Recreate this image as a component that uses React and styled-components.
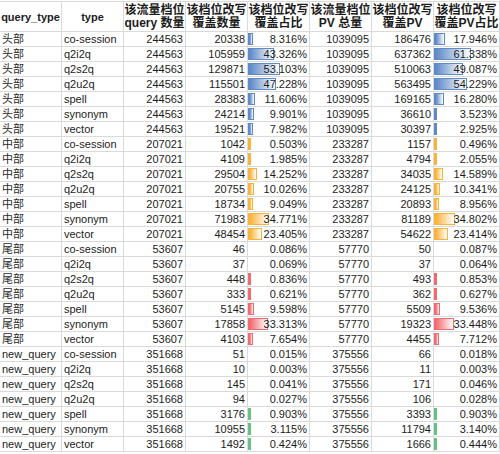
import React from "react";
import styled, { createGlobalStyle } from "styled-components";

const GlobalStyle = createGlobalStyle`
    html, body {
        margin: 0;
        padding: 0;
        background: #fff;
    }
    body {
        font-family: "Liberation Sans", "Noto Sans CJK SC", sans-serif;
        color: #1c1c1c;
    }
`

const Sheet = styled.div`
    width: 500px;
    height: 454px;
    overflow: hidden;
    padding-top: 1px;
    box-sizing: border-box;
`

const Grid = styled.div`
    display: grid;
    grid-template-columns: repeat(7, 62px) 66px;
    border-top: 1px solid #dadada;
`

const HeadCell = styled.div`
    height: 30px;
    box-sizing: border-box;
    border-right: 1px solid #dadada;
    border-bottom: 1px solid #dadada;
    display: flex;
    align-items: center;
    justify-content: center;
    text-align: center;
    font-weight: 700;
    font-size: ${props => (props.latin ? '11px' : '12px')};
    line-height: 13px;
    white-space: nowrap;
    padding-top: 1px;
`

const Cell = styled.div`
    position: relative;
    height: 15px;
    box-sizing: border-box;
    border-right: 1px solid #dadada;
    border-bottom: 1px solid #dadada;
    font-size: 11px;
    line-height: 14px;
    padding: 0 2px;
    white-space: nowrap;
    overflow: hidden;
    text-align: ${props => (props.right ? 'right' : 'left')};
    color: ${props => (props.cjk ? '#2a2a2a' : '#1c1c1c')};
`

const Bar = styled.div`
    position: absolute;
    left: 0;
    top: 1px;
    bottom: 1px;
    box-sizing: border-box;
    border: 1px solid ${props => props.color};
    border-left-width: 2px;
    background: linear-gradient(to right, ${props => props.color}, #ffffff);
`

const Value = styled.span`
    position: relative;
`

const colors = {
    '头部': '#5f8ac8',
    '中部': '#f9b33a',
    '尾部': '#f06a6f',
    'new_query': '#66c184',
}

const headers = [
    { text: 'query_type', latin: true },
    { text: 'type', latin: true },
    { text: ['该流量档位', 'query 数量'] },
    { text: ['该档位改写', '覆盖数量'] },
    { text: ['该档位改写', '覆盖占比'] },
    { text: ['该流量档位', 'PV 总量'] },
    { text: ['该档位改写', '覆盖PV'] },
    { text: ['该档位改写', '覆盖PV占比'] },
]

const rows = [
    ['头部', 'co-session', 244563, 20338, '8.316%', 1039095, 186476, '17.946%'],
    ['头部', 'q2i2q', 244563, 105959, '43.326%', 1039095, 637362, '61.338%'],
    ['头部', 'q2s2q', 244563, 129871, '53.103%', 1039095, 510063, '49.087%'],
    ['头部', 'q2u2q', 244563, 115501, '47.228%', 1039095, 563495, '54.229%'],
    ['头部', 'spell', 244563, 28383, '11.606%', 1039095, 169165, '16.280%'],
    ['头部', 'synonym', 244563, 24214, '9.901%', 1039095, 36610, '3.523%'],
    ['头部', 'vector', 244563, 19521, '7.982%', 1039095, 30397, '2.925%'],
    ['中部', 'co-session', 207021, 1042, '0.503%', 233287, 1157, '0.496%'],
    ['中部', 'q2i2q', 207021, 4109, '1.985%', 233287, 4794, '2.055%'],
    ['中部', 'q2s2q', 207021, 29504, '14.252%', 233287, 34035, '14.589%'],
    ['中部', 'q2u2q', 207021, 20755, '10.026%', 233287, 24125, '10.341%'],
    ['中部', 'spell', 207021, 18734, '9.049%', 233287, 20893, '8.956%'],
    ['中部', 'synonym', 207021, 71983, '34.771%', 233287, 81189, '34.802%'],
    ['中部', 'vector', 207021, 48454, '23.405%', 233287, 54622, '23.414%'],
    ['尾部', 'co-session', 53607, 46, '0.086%', 57770, 50, '0.087%'],
    ['尾部', 'q2i2q', 53607, 37, '0.069%', 57770, 37, '0.064%'],
    ['尾部', 'q2s2q', 53607, 448, '0.836%', 57770, 493, '0.853%'],
    ['尾部', 'q2u2q', 53607, 333, '0.621%', 57770, 362, '0.627%'],
    ['尾部', 'spell', 53607, 5145, '9.598%', 57770, 5509, '9.536%'],
    ['尾部', 'synonym', 53607, 17858, '33.313%', 57770, 19323, '33.448%'],
    ['尾部', 'vector', 53607, 4103, '7.654%', 57770, 4455, '7.712%'],
    ['new_query', 'co-session', 351668, 51, '0.015%', 375556, 66, '0.018%'],
    ['new_query', 'q2i2q', 351668, 10, '0.003%', 375556, 11, '0.003%'],
    ['new_query', 'q2s2q', 351668, 145, '0.041%', 375556, 171, '0.046%'],
    ['new_query', 'q2u2q', 351668, 94, '0.027%', 375556, 106, '0.028%'],
    ['new_query', 'spell', 351668, 3176, '0.903%', 375556, 3393, '0.903%'],
    ['new_query', 'synonym', 351668, 10955, '3.115%', 375556, 11794, '3.140%'],
    ['new_query', 'vector', 351668, 1492, '0.424%', 375556, 1666, '0.444%'],
]

// data bar cell: bar width follows the percentage
const PercentCell = ({ value, color }) => {
    const num = parseFloat(value);
    const width = num < 0.4 ? 0 : Math.max(2, num * 0.6);
    return (
        <Cell right>
            {width > 0 && <Bar color={color} style={{ width: `${width}px` }} />}
            <Value>{value}</Value>
        </Cell>
    )
}

const App = () => {
    return (<Sheet>
        <GlobalStyle />
        <Grid>
            {headers.map((h, idx) => (
                <HeadCell key={idx} latin={h.latin}>
                    {Array.isArray(h.text) ? <div>{h.text[0]}<br />{h.text[1]}</div> : h.text}
                </HeadCell>
            ))}
            {rows.map((r, idx) => {
                const color = colors[r[0]];
                return (
                    <React.Fragment key={idx}>
                        <Cell cjk={r[0] !== 'new_query'}>{r[0]}</Cell>
                        <Cell>{r[1]}</Cell>
                        <Cell right>{r[2]}</Cell>
                        <Cell right>{r[3]}</Cell>
                        <PercentCell value={r[4]} color={color} />
                        <Cell right>{r[5]}</Cell>
                        <Cell right>{r[6]}</Cell>
                        <PercentCell value={r[7]} color={color} />
                    </React.Fragment>
                )
            })}
        </Grid>
    </Sheet>)
}

export default App;
